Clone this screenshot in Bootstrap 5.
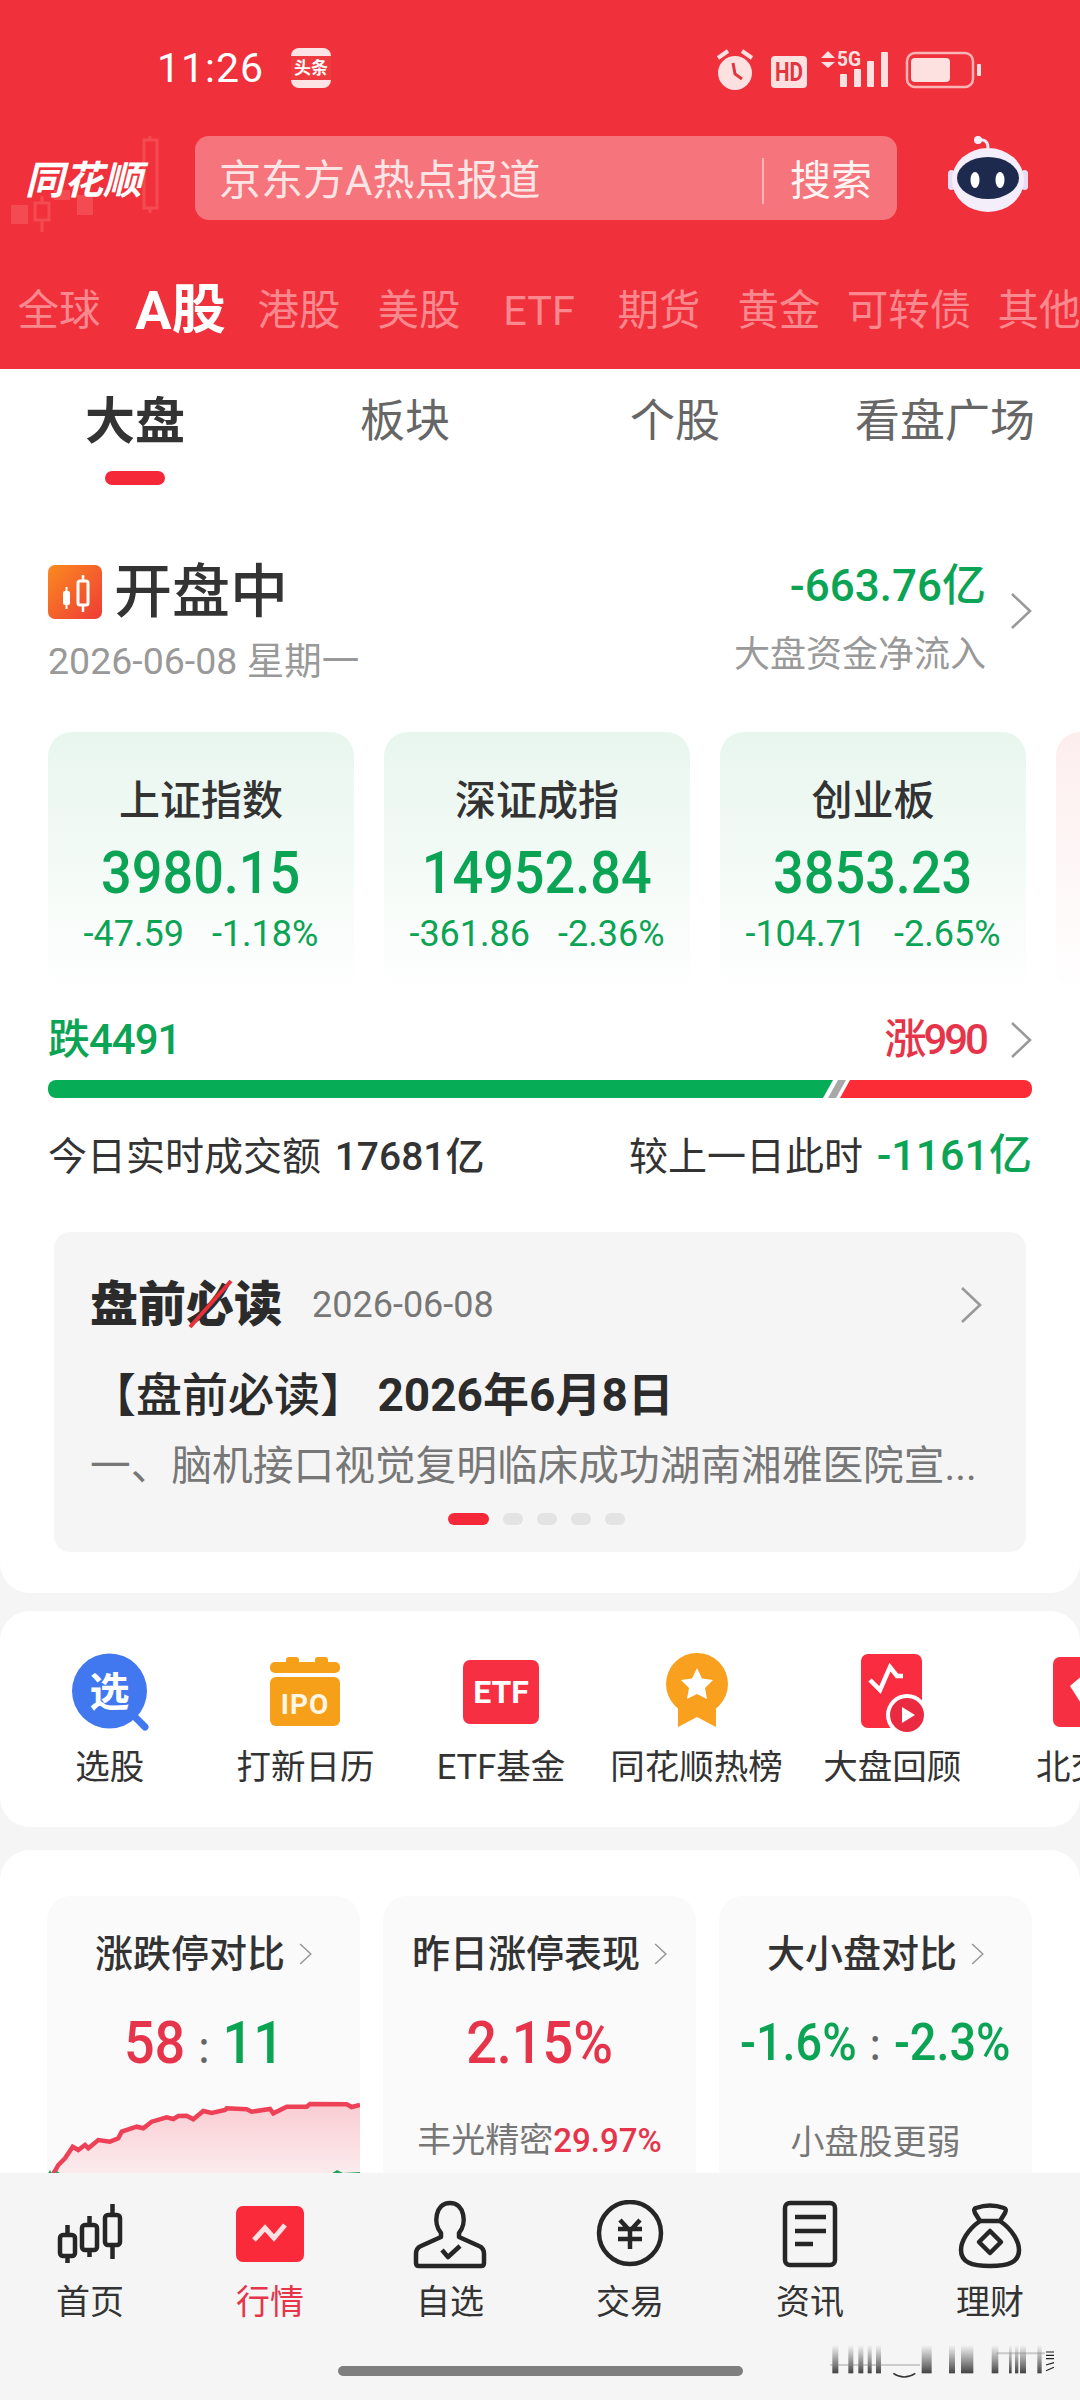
<!DOCTYPE html>
<html lang="zh-CN">
<head>
    <meta charset="UTF-8" />
    <meta name="viewport" content="width=device-width, initial-scale=1.0" />
    <title>同花顺 行情</title>
    <link href="https://cdn.jsdelivr.net/npm/bootstrap@5.3.0/dist/css/bootstrap.min.css" rel="stylesheet" />
    <style>
        html, body { margin: 0; background: #f5f5f5; }
        body { font-family: Roboto, "Noto Sans CJK SC", sans-serif; color: #333; }
        svg { display: block; }
        .phone { width: 1080px; height: 2400px; }
        .txt-green { color: #0ba354; }
        .txt-red { color: #e6354b; }
        .txt-grey { color: #999; }
        .narrow { display: inline-block; transform: scaleX(.9); }

        /* header */
        .top-head { background: #f0303a; height: 369px; flex: none; }
        .status-row { height: 136px; padding: 0 96px 0 157px; }
        .clock { font-size: 41px; line-height: 1; color: #fff; letter-spacing: 1px; margin-right: 27px; }
        .search-row { height: 84px; }
        .logo-box { width: 195px; height: 84px; }
        .logo-bg { left: 0; top: 0; }
        .logo-text { left: 25px; top: 23px; font-size: 39px; line-height: 44px; font-weight: 700; font-style: italic; color: #fff; letter-spacing: 0; white-space: nowrap; }
        .search-box { width: 702px; height: 84px; background: #f6747b; border-radius: 14px; padding: 5px 0 0 24px; }
        .search-hint { font-size: 42px; color: #fde4e5; flex: 1; white-space: nowrap; }
        .search-btn { font-size: 41px; color: #fff3f3; border-left: 2px solid #fbb3b7; line-height: 46px; padding: 0 25px 0 26px; white-space: nowrap; }
        .robot { margin-left: 51px; }
        .market-tabs { margin-top: 51px; height: 80px; margin-left: -1px; white-space: nowrap; }
        .market-tab { flex: 0 0 120px; text-align: center; font-size: 41.5px; line-height: 80px; color: #f9898e; }
        .market-tab.wide3 { flex-basis: 140px; }
        .market-tab.on { color: #fff; font-weight: 700; font-size: 54px; padding-left: 3px; }

        /* main */
        .sheet { background: #fff; border-radius: 0 0 30px 30px; }
        .sub-tab { flex: 0 0 270px; text-align: center; font-size: 45px; line-height: 60px; color: #666; padding-top: 23px; }
        .sub-tab.on { color: #333; font-weight: 700; font-size: 50px; }
        .tab-mark { width: 60px; height: 14px; border-radius: 7px; background: #f5283a; margin: 19px auto 0; }

        .head-row { margin-top: 67px; padding: 0 48px; }
        .open-line { margin-top: 5px; height: 70px; }
        .open-title { font-size: 58px; line-height: 70px; margin-left: 12px; font-weight: 500; }
        .date-line { margin-top: 12px; font-size: 37.5px; line-height: 44px; color: #999; }
        .flow-val { font-size: 44px; line-height: 56px; font-weight: 500; text-align: right; }
        .flow-sub { margin-top: 19px; font-size: 36px; line-height: 44px; color: #999; text-align: right; white-space: nowrap; }
        .flow-arrow { margin: 0 0 14px 24px; }

        .index-strip { margin-top: 49px; padding-left: 48px; gap: 30px; }
        .index-card { flex: 0 0 306px; height: 263px; border: 0; border-radius: 24px; background: linear-gradient(#e8f6ee, #fff); padding-top: 44px; text-align: center; }
        .index-card.pink { background: linear-gradient(#fdeeee, #fff); }
        .index-name { font-size: 41px; line-height: 50px; font-weight: 500; }
        .index-val { margin-top: 12px; font-size: 60px; line-height: 70px; font-weight: 500; }
        .index-chg { margin-top: 4px; font-size: 36px; line-height: 44px; gap: 28px; }

        .pad-48 { padding: 0 48px; }
        .breadth { margin-top: 20px; font-size: 42px; line-height: 50px; font-weight: 500; }
        .breadth-up { letter-spacing: -3px; }
        .breadth-down { letter-spacing: -1px; }
        .breadth-bar { margin: 15px 48px 0; height: 18px; border-radius: 8px; }
        .turnover { margin-top: 34px; height: 50px; font-size: 39px; line-height: 50px; white-space: nowrap; }
        .turnover b { font-weight: 500; margin-left: 4px; line-height: 1; }
        .turnover b.txt-green { font-size: 43px; }

        .read-card { margin: 50px 54px 0; height: 320px; background: #f5f5f5; border-radius: 16px; padding: 43px 44px 0 36px; }
        .read-logo { font-size: 48px; line-height: 60px; font-weight: 900; color: #2b2b2b; width: 192px; white-space: nowrap; }
        .read-slash { left: 0; top: 0; }
        .read-date { margin-left: 30px; font-size: 36px; color: #777; }
        .read-title { margin-top: 32px; font-size: 46px; line-height: 56px; font-weight: 500; white-space: nowrap; color: #2b2b2b; }
        .read-title b { font-weight: 700; }
        .read-body { margin-top: 18px; font-size: 40.7px; line-height: 50px; color: #777; white-space: nowrap; }
        .read-dots { margin-top: 22px; gap: 14px; }
        .read-dot { width: 20px; height: 12px; border-radius: 6px; background: #e3e3e3; }
        .read-dot.on { width: 41px; background: #f5283a; }
        .sheet-one { padding-bottom: 41px; }

        .sheet-tools { margin-top: 18px; border-radius: 30px; height: 216px; padding: 41px 0 0 12px; }
        .tool-cell { flex: 0 0 195.6px; text-align: center; }
        .tool-cell svg { margin: 0 auto; }
        .tool-label { margin-top: 9px; font-size: 34.5px; line-height: 44px; white-space: nowrap; }

        .sheet-compare { margin-top: 23px; border-radius: 30px 30px 0 0; padding: 46px 0 0 47px; height: 500px; gap: 23px; }
        .cmp-card { flex: 0 0 313px; height: 420px; background: #fafafa; border-radius: 24px; padding-top: 35px; text-align: center; }
        .cmp-title { font-size: 38px; line-height: 46px; font-weight: 500; gap: 14px; white-space: nowrap; }
        .cmp-val { margin-top: 31px; font-size: 60px; line-height: 70px; font-weight: 500; white-space: nowrap; }
        .cmp-val.small-val { font-size: 52px; }
        .cmp-sep { color: #666; font-size: 44px; margin: 0 4px; }
        .cmp-sub { margin-top: 40px; font-size: 34px; line-height: 44px; color: #777; white-space: nowrap; }
        .cmp-sub span { font-size: 33px; font-weight: 500; }
        .cmp-chart { margin-top: 12px; }

        /* bottom nav */
        .bottom-nav { flex: none; height: 227px; background: #f5f5f5; padding-top: 27px; }
        .nav-cell { flex: 0 0 180px; text-align: center; }
        .nav-cell svg { margin: 0 auto; }
        .nav-label { margin-top: 8px; font-size: 34px; line-height: 44px; }
        .home-bar { width: 405px; height: 10px; border-radius: 5px; background: #7f7f7f; margin: 42px auto 0; }
        .smudge { right: 0; bottom: 0; }
    </style>
</head>
<body>

<svg width="0" height="0" class="position-absolute">
    <symbol id="chev" viewBox="0 0 22 36"><path d="M2 1 L20 18 L2 35" fill="none" stroke="#999" stroke-width="2.6"/></symbol>
</svg>

<div class="phone d-flex flex-column overflow-hidden">

    <!-- Red header -->
    <header class="top-head">
        <div class="status-row d-flex align-items-center">
            <span class="clock">11:26</span>
            <svg width="40" height="40" viewBox="0 0 40 40">
                <rect width="40" height="40" rx="8" fill="#fde4e4"/>
                <rect y="8" width="40" height="24" fill="#ee3b3f"/>
                <text x="20" y="26" text-anchor="middle" font-size="17" font-weight="700" fill="#fff" font-family="Noto Sans CJK SC">头条</text>
            </svg>
            <svg class="ms-auto" width="270" height="45" viewBox="715 45 270 45">
                <g fill="#fde0e0">
                    <circle cx="736" cy="72" r="17"/>
                    <path d="M719 57 L729 50" stroke="#fde0e0" stroke-width="4"/>
                    <path d="M743 50 L753 57" stroke="#fde0e0" stroke-width="4"/>
                    <rect x="772" y="55" width="36" height="32" rx="4"/>
                    <path d="M822 57 L829 50 L836 57Z M822 61 L836 61 L829 67Z"/>
                    <rect x="841" y="73" width="7" height="13" rx="1"/>
                    <rect x="855" y="68" width="7" height="18" rx="1"/>
                    <rect x="868" y="60" width="7" height="26" rx="1"/>
                    <rect x="882" y="51" width="7" height="35" rx="1"/>
                    <rect x="912" y="57" width="39" height="24" rx="4"/>
                    <rect x="978" y="63" width="4" height="12" rx="1"/>
                </g>
                <path d="M734 62 L736 73 L743 78" fill="none" stroke="#e4353f" stroke-width="3"/>
                <text x="790" y="80" text-anchor="middle" font-size="25" font-weight="700" fill="#e4353f" font-family="Roboto" textLength="28" lengthAdjust="spacingAndGlyphs">HD</text>
                <text x="838" y="65" font-size="20" font-weight="700" fill="#fde0e0" font-family="Roboto" textLength="24" lengthAdjust="spacingAndGlyphs">5G</text>
                <rect x="908" y="52" width="66" height="34" rx="8" fill="none" stroke="#fab4b6" stroke-width="2.5"/>
            </svg>
        </div>

        <div class="search-row d-flex">
            <div class="logo-box position-relative">
                <svg class="logo-bg position-absolute" width="195" height="100" viewBox="0 136 195 100">
                    <g fill="#f44a52">
                        <rect x="11" y="205" width="17" height="19"/>
                        <rect x="77" y="195" width="16" height="20"/>
                        <rect x="54" y="190" width="16" height="10"/>
                    </g>
                    <g fill="none" stroke="#f44a52" stroke-width="3">
                        <rect x="35" y="203" width="14" height="17"/>
                        <path d="M42 196 V203 M42 220 V232"/>
                        <rect x="144" y="140" width="13" height="68"/>
                        <path d="M150 133 V140 M150 208 V213"/>
                    </g>
                </svg>
                <span class="logo-text position-absolute">同花顺</span>
            </div>
            <div class="search-box d-flex align-items-center">
                <span class="search-hint">京东方A热点报道</span>
                <span class="search-btn">搜索</span>
            </div>
            <svg class="robot" width="80" height="84" viewBox="948 136 80 84">
                <path d="M988 148 C988 141 984 139 978 140" fill="none" stroke="#efe9f8" stroke-width="3"/>
                <circle cx="978" cy="140" r="4" fill="#f6f1fb"/>
                <rect x="948" y="170" width="7" height="20" rx="3.5" fill="#e6ddf5"/>
                <rect x="1021" y="170" width="7" height="20" rx="3.5" fill="#e6ddf5"/>
                <ellipse cx="988" cy="180" rx="36" ry="32" fill="#f3eefa"/>
                <ellipse cx="988" cy="178" rx="31" ry="21" fill="#1e2a4d"/>
                <ellipse cx="975" cy="180" rx="4.5" ry="8" fill="#fff"/>
                <ellipse cx="1000" cy="180" rx="4.5" ry="8" fill="#fff"/>
            </svg>
        </div>

        <div class="market-tabs d-flex">
            <span class="market-tab">全球</span>
            <span class="market-tab on">A股</span>
            <span class="market-tab">港股</span>
            <span class="market-tab">美股</span>
            <span class="market-tab">ETF</span>
            <span class="market-tab">期货</span>
            <span class="market-tab">黄金</span>
            <span class="market-tab wide3">可转债</span>
            <span class="market-tab">其他</span>
        </div>
    </header>

    <main class="flex-grow-1 overflow-hidden">
        <section class="sheet sheet-one">
            <div class="d-flex">
                <div class="sub-tab on">大盘<div class="tab-mark"></div></div>
                <div class="sub-tab">板块</div>
                <div class="sub-tab">个股</div>
                <div class="sub-tab">看盘广场</div>
            </div>

            <div class="head-row d-flex justify-content-between">
                <div>
                    <div class="open-line d-flex align-items-center">
                        <svg width="54" height="54" viewBox="0 0 54 54">
                            <defs><linearGradient id="og" x1="0" y1="0" x2="1" y2="1"><stop offset="0" stop-color="#fb8a1e"/><stop offset="1" stop-color="#ee3b37"/></linearGradient></defs>
                            <rect width="54" height="54" rx="7" fill="url(#og)"/>
                            <rect x="15" y="26" width="7" height="14" rx="2" fill="#fff"/>
                            <path d="M18.5 22 V44" stroke="#fff" stroke-width="2"/>
                            <rect x="30" y="16" width="10" height="24" rx="2" fill="none" stroke="#fff" stroke-width="3"/>
                            <path d="M35 10 V16 M35 40 V47" stroke="#fff" stroke-width="2.5"/>
                        </svg>
                        <span class="open-title">开盘中</span>
                    </div>
                    <div class="date-line">2026-06-08 星期一</div>
                </div>
                <div class="d-flex align-items-center">
                    <div>
                        <div class="flow-val txt-green">-663.76亿</div>
                        <div class="flow-sub">大盘资金净流入</div>
                    </div>
                    <svg class="flow-arrow" width="22" height="36"><use href="#chev"/></svg>
                </div>
            </div>

            <div class="index-strip d-flex overflow-hidden">
                <div class="card index-card">
                    <div class="index-name">上证指数</div>
                    <div class="index-val txt-green"><span class="narrow">3980.15</span></div>
                    <div class="index-chg txt-green d-flex justify-content-center"><span>-47.59</span><span>-1.18%</span></div>
                </div>
                <div class="card index-card">
                    <div class="index-name">深证成指</div>
                    <div class="index-val txt-green"><span class="narrow">14952.84</span></div>
                    <div class="index-chg txt-green d-flex justify-content-center"><span>-361.86</span><span>-2.36%</span></div>
                </div>
                <div class="card index-card">
                    <div class="index-name">创业板</div>
                    <div class="index-val txt-green"><span class="narrow">3853.23</span></div>
                    <div class="index-chg txt-green d-flex justify-content-center"><span>-104.71</span><span>-2.65%</span></div>
                </div>
                <div class="card index-card pink"></div>
            </div>

            <div class="breadth pad-48 d-flex justify-content-between align-items-center">
                <span class="txt-green breadth-down">跌4491</span>
                <span class="d-flex align-items-center txt-red breadth-up">涨990<svg class="ms-4" width="22" height="36"><use href="#chev"/></svg></span>
            </div>
            <div class="breadth-bar overflow-hidden">
                <svg width="984" height="18" viewBox="0 0 984 18">
                    <polygon points="0,0 785,0 775,18 0,18" fill="#06ad56"/>
                    <polygon points="790,0 798,0 788,18 780,18" fill="#a8a8a8"/>
                    <polygon points="802,0 984,0 984,18 792,18" fill="#fb2c36"/>
                </svg>
            </div>
            <div class="turnover pad-48 d-flex justify-content-between align-items-center">
                <span>今日实时成交额 <b>17681亿</b></span>
                <span>较上一日此时 <b class="txt-green">-1161亿</b></span>
            </div>

            <div class="read-card">
                <div class="d-flex align-items-center">
                    <div class="read-logo position-relative">盘前必读
                        <svg class="read-slash position-absolute" width="192" height="60" viewBox="0 0 192 60"><path d="M100 52 L141 6" stroke="#e8303a" stroke-width="4"/></svg>
                    </div>
                    <span class="read-date">2026-06-08</span>
                    <svg class="ms-auto" width="22" height="36"><use href="#chev"/></svg>
                </div>
                <div class="read-title">【盘前必读】 <b>2026年6月8日</b></div>
                <div class="read-body">一、脑机接口视觉复明临床成功湖南湘雅医院宣...</div>
                <div class="read-dots d-flex justify-content-center">
                    <span class="read-dot on"></span><span class="read-dot"></span><span class="read-dot"></span><span class="read-dot"></span><span class="read-dot"></span>
                </div>
            </div>
        </section>

        <!-- Shortcuts -->
        <section class="sheet sheet-tools d-flex overflow-hidden">
            <div class="tool-cell">
                <svg width="110" height="84" viewBox="0 0 110 84">
                    <path d="M78 63 L90 75" stroke="#4178ef" stroke-width="7" stroke-linecap="round"/>
                    <circle cx="54.5" cy="39" r="37.5" fill="#4178ef"/>
                    <text x="54.5" y="54" text-anchor="middle" font-size="40" font-weight="700" fill="#fff" font-family="Noto Sans CJK SC">选</text>
                </svg>
                <div class="tool-label">选股</div>
            </div>
            <div class="tool-cell">
                <svg width="110" height="84" viewBox="0 0 110 84">
                    <g fill="#f6a01a">
                        <rect x="36" y="5" width="13" height="10" rx="3"/>
                        <rect x="65" y="5" width="13" height="10" rx="3"/>
                        <rect x="20" y="10" width="70" height="11" rx="5"/>
                        <rect x="20" y="25" width="70" height="49" rx="6"/>
                    </g>
                    <text x="55" y="62" text-anchor="middle" font-size="28" font-weight="700" fill="#fff6e5" font-family="Roboto" letter-spacing="1">IPO</text>
                </svg>
                <div class="tool-label">打新日历</div>
            </div>
            <div class="tool-cell">
                <svg width="110" height="84" viewBox="0 0 110 84">
                    <rect x="17" y="8" width="76" height="64" rx="7" fill="#f72f43"/>
                    <text x="55" y="51" text-anchor="middle" font-size="32" font-weight="700" fill="#fff" font-family="Roboto">ETF</text>
                </svg>
                <div class="tool-label">ETF基金</div>
            </div>
            <div class="tool-cell">
                <svg width="110" height="84" viewBox="0 0 110 84">
                    <path d="M36 52 V75 L55 65 L74 75 V52Z" fill="#f9a01e"/>
                    <circle cx="55" cy="32" r="31" fill="#f9a11e"/>
                    <path d="M55 16 L60 26.5 L71 28 L63 36 L65 47 L55 42 L45 47 L47 36 L39 28 L50 26.5Z" fill="#fff"/>
                </svg>
                <div class="tool-label">同花顺热榜</div>
            </div>
            <div class="tool-cell">
                <svg width="110" height="84" viewBox="0 0 110 84">
                    <rect x="24" y="2" width="61" height="74" rx="7" fill="#f92c40"/>
                    <path d="M33 28 L43 38 L53 15 L60 24 L66 24" fill="none" stroke="#fff" stroke-width="4.5"/>
                    <circle cx="70" cy="63" r="21" fill="#fff"/>
                    <circle cx="70" cy="63" r="17" fill="#e92a40"/>
                    <path d="M65 55 L78 63 L65 71Z" fill="#fff"/>
                </svg>
                <div class="tool-label">大盘回顾</div>
            </div>
            <div class="tool-cell">
                <svg width="110" height="84" viewBox="0 0 110 84">
                    <rect x="20" y="5" width="80" height="70" rx="7" fill="#f72f43"/>
                    <path d="M37 34 L51 22 L65 34 L51 56Z" fill="#fff"/>
                </svg>
                <div class="tool-label">北交所</div>
            </div>
        </section>

        <!-- Comparison cards -->
        <section class="sheet sheet-compare d-flex overflow-hidden">
            <div class="cmp-card overflow-hidden">
                <div class="cmp-title d-flex justify-content-center align-items-center">涨跌停对比<svg width="13" height="24"><use href="#chev"/></svg></div>
                <div class="cmp-val"><span class="narrow"><span class="txt-red">58</span><span class="cmp-sep"> : </span><span class="txt-green">11</span></span></div>
                <svg class="cmp-chart" width="313" height="90" viewBox="0 0 313 90">
                    <defs><linearGradient id="pk" x1="0" y1="0" x2="0" y2="1"><stop offset="0" stop-color="#f9ccd2"/><stop offset="1" stop-color="#fcf1f2"/></linearGradient></defs>
                    <path d="M4.7 90 L4.7 81.7 L11.3 70 L18 63.3 L25.7 51.7 L31.3 55 L38 50 L41.3 53.3 L51.3 45 L63 46.7 L71.3 43.3 L74.7 36.7 L89.7 31.7 L96.3 33.3 L104.7 26.7 L119.7 22.3 L126.3 24 L131.3 21 L139.7 20.7 L146.3 24.3 L156.3 16 L164.7 18 L178 15 L179.7 13.3 L199.7 14.3 L204.7 16.7 L223 14 L226.3 18.3 L239.7 11.7 L259.7 11.7 L263 9 L299.7 9.3 L304.7 12 L313 10 L313 90Z" fill="url(#pk)"/>
                    <path d="M4.7 81.7 L11.3 70 L18 63.3 L25.7 51.7 L31.3 55 L38 50 L41.3 53.3 L51.3 45 L63 46.7 L71.3 43.3 L74.7 36.7 L89.7 31.7 L96.3 33.3 L104.7 26.7 L119.7 22.3 L126.3 24 L131.3 21 L139.7 20.7 L146.3 24.3 L156.3 16 L164.7 18 L178 15 L179.7 13.3 L199.7 14.3 L204.7 16.7 L223 14 L226.3 18.3 L239.7 11.7 L259.7 11.7 L263 9 L299.7 9.3 L304.7 12 L313 10" fill="none" stroke="#ee4056" stroke-width="4.5"/>
                    <path d="M0 80 L3 75 L6 80 L10 76 L18 82 V90 H0Z M268 82 L284 79 L290 75 L296 78 L313 77 V90 H268Z" fill="#1aa55c"/>
                </svg>
            </div>
            <div class="cmp-card">
                <div class="cmp-title d-flex justify-content-center align-items-center">昨日涨停表现<svg width="13" height="24"><use href="#chev"/></svg></div>
                <div class="cmp-val txt-red"><span class="narrow">2.15%</span></div>
                <div class="cmp-sub">丰光精密<span class="txt-red">29.97%</span></div>
            </div>
            <div class="cmp-card">
                <div class="cmp-title d-flex justify-content-center align-items-center">大小盘对比<svg width="13" height="24"><use href="#chev"/></svg></div>
                <div class="cmp-val small-val txt-green"><span class="narrow">-1.6%<span class="cmp-sep"> : </span>-2.3%</span></div>
                <div class="cmp-sub">小盘股更弱</div>
            </div>
        </section>
    </main>

    <!-- Bottom nav -->
    <nav class="bottom-nav position-relative">
        <div class="d-flex">
            <div class="nav-cell">
                <svg width="90" height="72" viewBox="0 0 90 72" fill="none" stroke="#262626" stroke-width="4.5">
                    <rect x="15" y="35" width="15" height="21" rx="3"/><path d="M22.5 25 V35 M22.5 56 V63"/>
                    <rect x="37" y="25" width="15" height="25" rx="3"/><path d="M44.5 16 V25 M44.5 50 V57"/>
                    <rect x="60" y="15" width="15" height="30" rx="3"/><path d="M67.5 4 V15 M67.5 45 V59"/>
                </svg>
                <div class="nav-label">首页</div>
            </div>
            <div class="nav-cell">
                <svg width="90" height="72" viewBox="0 0 90 72">
                    <rect x="11" y="6" width="68" height="56" rx="7" fill="#fb2a3b"/>
                    <path d="M29 40 L40 28 L49 38 L60 25" fill="none" stroke="#fde0e2" stroke-width="5"/>
                </svg>
                <div class="nav-label txt-red">行情</div>
            </div>
            <div class="nav-cell">
                <svg width="90" height="72" viewBox="0 0 90 72" fill="none" stroke="#262626" stroke-width="4.5" stroke-linejoin="round">
                    <path d="M36 33 C28 24 30 3 45 3 C60 3 62 24 54 33 L54 37 L74 46 Q79 48 79 54 L79 63 Q79 66 76 66 L14 66 Q11 66 11 63 L11 54 Q11 48 16 46 L36 37Z"/>
                    <path d="M37 50 L43 57 L55 46"/>
                </svg>
                <div class="nav-label">自选</div>
            </div>
            <div class="nav-cell">
                <svg width="90" height="72" viewBox="0 0 90 72" fill="none" stroke="#262626" stroke-width="4.5">
                    <circle cx="45" cy="33" r="31"/>
                    <path d="M35 20 L45 31 L55 20 M33 29 H57 M33 39 H57 M45 30 V49"/>
                </svg>
                <div class="nav-label">交易</div>
            </div>
            <div class="nav-cell">
                <svg width="90" height="72" viewBox="0 0 90 72" fill="none" stroke="#262626" stroke-width="4.5">
                    <rect x="20" y="3" width="50" height="62" rx="5"/>
                    <path d="M30 17 H61 M30 31 H61 M30 44 H48"/>
                </svg>
                <div class="nav-label">资讯</div>
            </div>
            <div class="nav-cell">
                <svg width="90" height="72" viewBox="0 0 90 72" fill="none" stroke="#262626" stroke-width="4.5" stroke-linejoin="round">
                    <path d="M31 8 Q45 3 59 8 Q62 9 60 13 L55 21 H35 L30 13 Q28 9 31 8Z"/>
                    <path d="M35 21 C22 30 16 42 16 50 C16 62 26 66 45 66 C64 66 74 62 74 50 C74 42 68 30 55 21"/>
                    <path d="M45 31 L56 42 L45 53 L34 42Z"/>
                </svg>
                <div class="nav-label">理财</div>
            </div>
        </div>
        <div class="home-bar"></div>
        <!-- blurred smudge at the corner of the screenshot -->
        <svg class="smudge position-absolute" width="280" height="70" viewBox="0 0 840 210">
            <defs><linearGradient id="fade" x1="0" y1="0" x2="0" y2="1"><stop offset="0" stop-color="#333" stop-opacity="0"/><stop offset="1" stop-color="#222" stop-opacity=".85"/></linearGradient></defs>
            <g fill="url(#fade)">
                <rect x="97" y="45" width="18" height="85"/><rect x="145" y="45" width="15" height="85"/>
                <rect x="175" y="45" width="15" height="85"/><rect x="203" y="45" width="12" height="85"/>
                <rect x="228" y="45" width="15" height="85"/><rect x="365" y="45" width="30" height="85"/>
                <rect x="447" y="45" width="18" height="85"/><rect x="483" y="45" width="37" height="85"/>
                <rect x="575" y="45" width="20" height="85"/><rect x="627" y="45" width="8" height="85"/>
                <rect x="645" y="45" width="10" height="85"/><rect x="660" y="45" width="18" height="85"/>
                <rect x="712" y="45" width="13" height="85"/>
            </g>
            <path d="M280 130 Q312 152 346 130" fill="none" stroke="#333" stroke-width="4"/>
            <path d="M90 105 H360" stroke="#888" stroke-width="4" opacity=".5"/>
            <path d="M590 70 H735" stroke="#888" stroke-width="6" opacity=".4"/>
            <path d="M738 66 H762 M738 76 H762 M738 86 H762 M738 105 L762 98 M738 122 L762 112" stroke="#222" stroke-width="3.5"/>
        </svg>
    </nav>
</div>

</body>
</html>
